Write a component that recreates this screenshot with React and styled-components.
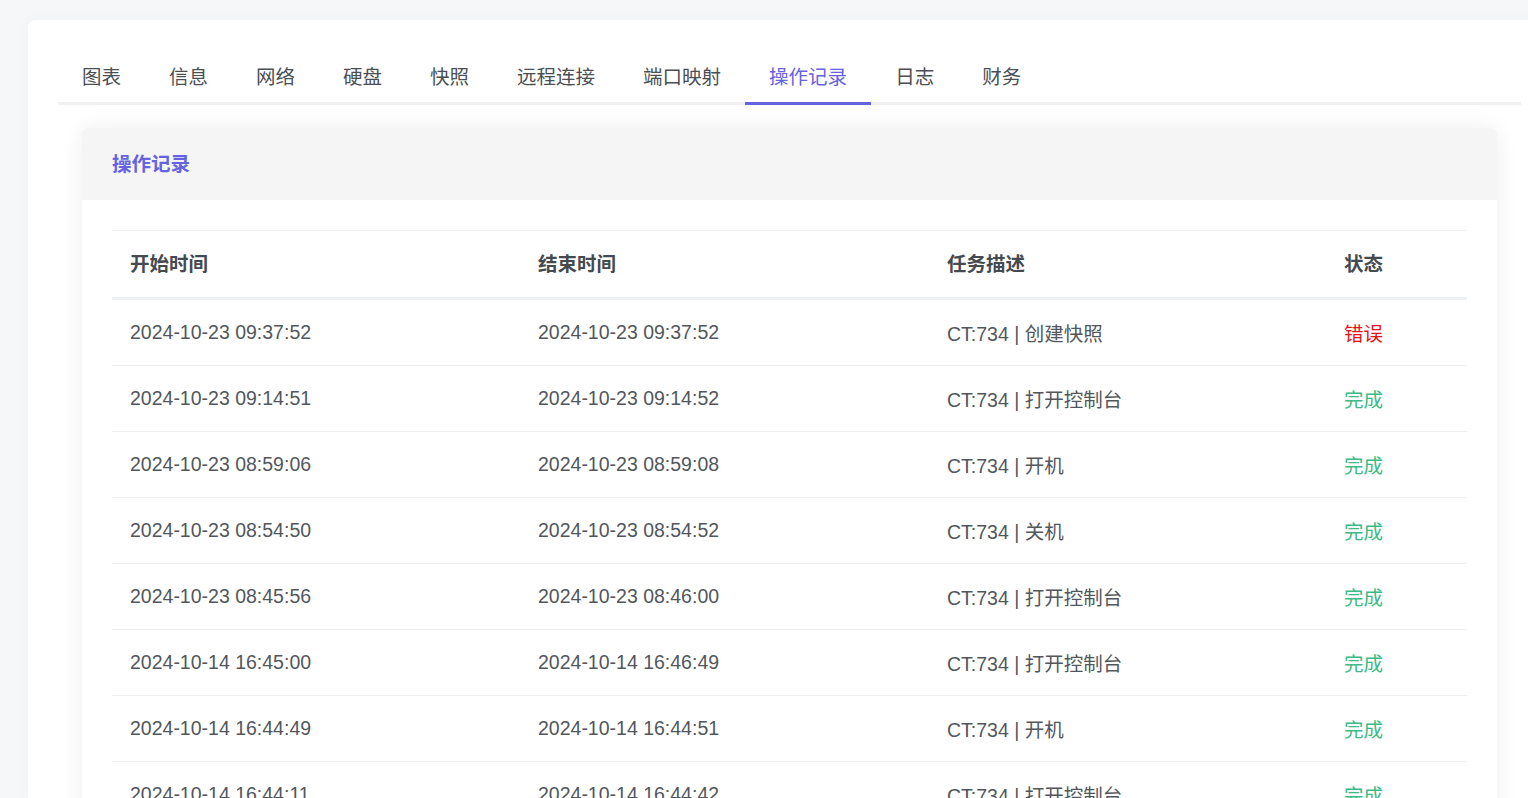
import React from "react";
import styled, { createGlobalStyle } from "styled-components";

const GlobalStyle = createGlobalStyle`
    html, body {
        margin: 0;
        padding: 0;
        background: #f6f7f9;
        overflow: hidden;
    }
    body {
        font-family: "Liberation Sans", Arial, "Noto Sans CJK SC", sans-serif;
    }
`;

const Page = styled.div`
    padding: 20px 0 0 28px;
    width: 1551px;
    height: 798px;
    box-sizing: border-box;
`;

const Panel = styled.div`
    background: #fff;
    border-radius: 8px 8px 0 0;
    padding: 30px 30px 0 30px;
    height: 100%;
    box-sizing: border-box;
    box-shadow: 0 0 16px rgba(0, 0, 0, 0.03);
`;

const Tabs = styled.div`
    display: flex;
    border-bottom: 3px solid #f1f1f3;
`;

const Tab = styled.div`
    padding: 0 24px 2px 24px;
    height: 50px;
    display: flex;
    align-items: center;
    font-size: 19.5px;
    color: ${(p) => (p.$active ? "#6563e0" : "#4b4f54")};
    margin-bottom: -3px;
    border-bottom: 3px solid ${(p) => (p.$active ? "#6563e0" : "transparent")};
    cursor: pointer;
`;

const Card = styled.div`
    margin: 23px 24px 0 24px;
    background: #fff;
    border-radius: 6px 6px 0 0;
    box-shadow: 0 0 22px rgba(0, 0, 0, 0.07);
`;

const CardHeader = styled.div`
    height: 72px;
    padding-bottom: 3px;
    box-sizing: border-box;
    background: #f5f5f6;
    border-radius: 6px 6px 0 0;
    padding-left: 30px;
    display: flex;
    align-items: center;
    font-size: 19.5px;
    font-weight: bold;
    color: #6563e0;
`;

const CardBody = styled.div`
    padding: 30px;
`;

const Table = styled.table`
    width: 100%;
    table-layout: fixed;
    border-collapse: collapse;
    border-top: 1px solid #eef0f2;
    font-size: 19.5px;
`;

const Th = styled.th`
    box-sizing: border-box;
    text-align: left;
    font-weight: bold;
    color: #454a50;
    height: 68px;
    padding: 0 18px 3px 18px;
    border-bottom: 3px solid #eef1f4;
    width: ${(p) => p.$w || "auto"};
`;

const Row = styled.tr`
    border-bottom: 1px solid #eef0f2;
`;

const Td = styled.td`
    height: 65px;
    padding: 0 18px;
    white-space: nowrap;
    color: ${(p) => p.$color || "#52575c"};
`;

const tabs = ["图表", "信息", "网络", "硬盘", "快照", "远程连接", "端口映射", "操作记录", "日志", "财务"];

const rows = [
    ["2024-10-23 09:37:52", "2024-10-23 09:37:52", "CT:734 | 创建快照", "错误"],
    ["2024-10-23 09:14:51", "2024-10-23 09:14:52", "CT:734 | 打开控制台", "完成"],
    ["2024-10-23 08:59:06", "2024-10-23 08:59:08", "CT:734 | 开机", "完成"],
    ["2024-10-23 08:54:50", "2024-10-23 08:54:52", "CT:734 | 关机", "完成"],
    ["2024-10-23 08:45:56", "2024-10-23 08:46:00", "CT:734 | 打开控制台", "完成"],
    ["2024-10-14 16:45:00", "2024-10-14 16:46:49", "CT:734 | 打开控制台", "完成"],
    ["2024-10-14 16:44:49", "2024-10-14 16:44:51", "CT:734 | 开机", "完成"],
    ["2024-10-14 16:44:11", "2024-10-14 16:44:42", "CT:734 | 打开控制台", "完成"],
];

const App = () => {
    return (
        <>
            <GlobalStyle />
            <Page>
                <Panel>
                    <Tabs>
                        {tabs.map((t) => (
                            <Tab key={t} $active={t === "操作记录"}>{t}</Tab>
                        ))}
                    </Tabs>
                    <Card>
                        <CardHeader>操作记录</CardHeader>
                        <CardBody>
                            <Table>
                                <thead>
                                    <tr>
                                        <Th $w="408px">开始时间</Th>
                                        <Th $w="409px">结束时间</Th>
                                        <Th $w="397px">任务描述</Th>
                                        <Th>状态</Th>
                                    </tr>
                                </thead>
                                <tbody>
                                    {rows.map((r, i) => (
                                        <Row key={i}>
                                            <Td>{r[0]}</Td>
                                            <Td>{r[1]}</Td>
                                            <Td>{r[2]}</Td>
                                            <Td $color={r[3] === "错误" ? "#e3121b" : "#3dba85"}>{r[3]}</Td>
                                        </Row>
                                    ))}
                                </tbody>
                            </Table>
                        </CardBody>
                    </Card>
                </Panel>
            </Page>
        </>
    );
};

export default App;
